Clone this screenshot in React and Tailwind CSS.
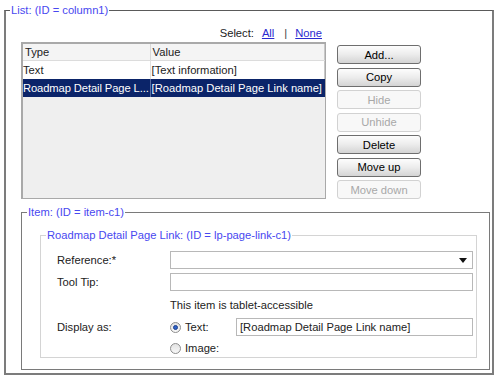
import React from 'react';

const font = { fontFamily: '"Liberation Sans", Arial, sans-serif' };

const Button = ({ children, disabled }) => (
  <div
    className={
      disabled
        ? 'h-[19px] w-[84px] flex items-center justify-center rounded-[3px] border border-[#d2d2d2] bg-[#f8f8f8] text-[#a8a8a8]'
        : 'h-[19px] w-[84px] flex items-center justify-center rounded-[3px] border border-[#6e6e6e] bg-gradient-to-b from-[#fdfdfd] via-[#ececec] to-[#d4d4d4] text-black'
    }
  >
    {children}
  </div>
);

const Radio = ({ checked }) => (
  <span className="w-[11px] h-[11px] rounded-full border border-[#8d8d8d] bg-gradient-to-b from-[#e2e2e2] to-[#f8f8f8] flex items-center justify-center shrink-0">
    {checked && <span className="w-[5px] h-[5px] rounded-full bg-[#2c62c8] border border-[#1d3f8c]" />}
  </span>
);

const App = () => {
  return (
    <div className="w-[500px] h-[379px] bg-white pl-[4px] pt-[3px] text-[11.2px] leading-[14px] text-[#222]" style={font}>
      {/* Outer list fieldset */}
      <fieldset className="w-[490px] h-[372px] border-t border-x-2 border-b-2 border-[#7c7c7c] border-t-[#5a5a5a]">
        <legend className="ml-[4px] px-[1px] text-[#4848f0]">List: (ID = column1)</legend>
        <div className="pl-[15px] pr-[2px]">
          {/* Select row */}
          <div className="w-[305px] flex justify-end items-center pt-[9px] pr-[4px] h-[23px]">
            <span>Select:</span>
            <span className="text-[#2a2ad0] underline ml-[8px]">All</span>
            <span className="text-[#444] ml-[10px]">|</span>
            <span className="text-[#2a2ad0] underline ml-[8px]">None</span>
          </div>

          <div className="flex gap-[11px] mt-[2px]">
            {/* Table */}
            <div className="w-[305px] h-[157px] border border-[#a9a9a9] border-l-2 border-t-2 bg-[#efefef] overflow-hidden">
              <div className="flex h-[17px] bg-[#f4f4f4] border-b border-[#dcdcdc]">
                <div className="w-[128px] pl-[2px] flex items-center border-r border-[#d8d8d8]">Type</div>
                <div className="w-[175px] pl-[2px] flex items-center border-r border-[#c8c8c8]">Value</div>
              </div>
              <div className="flex h-[18px] bg-white">
                <div className="w-[128px] flex items-center border-r border-[#e0e0e0]">Text</div>
                <div className="w-[175px] pl-[1px] flex items-center border-r border-[#c8c8c8]">[Text information]</div>
              </div>
              <div className="flex h-[18px] bg-[#0b2469] text-white">
                <div className="w-[128px] flex items-center border-r border-[#5a6ea0] whitespace-nowrap tracking-[-0.1px]">Roadmap Detail Page L...</div>
                <div className="w-[175px] pl-[1px] flex items-center whitespace-nowrap overflow-hidden">[Roadmap Detail Page Link name]</div>
              </div>
            </div>

            {/* Buttons */}
            <div className="flex flex-col gap-[3.5px] mt-[3px]">
              <Button>Add...</Button>
              <Button>Copy</Button>
              <Button disabled>Hide</Button>
              <Button disabled>Unhide</Button>
              <Button>Delete</Button>
              <Button>Move up</Button>
              <Button disabled>Move down</Button>
            </div>
          </div>

          {/* Item fieldset */}
          <fieldset className="mt-[6px] w-[469px] border border-[#7a7a7a]">
            <legend className="ml-[5px] px-[1px] text-[#4848f0]">Item: (ID = item-c1)</legend>
            <div className="pl-[18px] pr-[12px] pt-[9px] pb-[11px]">
              <fieldset className="w-[437px] border border-[#d4d4d4]">
                <legend className="ml-[5px] px-[1px] text-[#4848f0]">Roadmap Detail Page Link: (ID = lp-page-link-c1)</legend>
                <div className="pl-[16px] pr-[3px] pt-[9px] pb-[2px]">
                  <div className="flex items-center h-[18px]">
                    <span className="w-[113px]">Reference:*</span>
                    <div className="flex-1 h-[18px] border border-[#b8b8b8] bg-white flex items-center justify-end pr-[5px]">
                      <svg width="8" height="5" viewBox="0 0 8 5">
                        <path d="M0 0 L8 0 L4 5 Z" fill="#111" />
                      </svg>
                    </div>
                  </div>
                  <div className="flex items-center h-[18px] mt-[4px]">
                    <span className="w-[113px]">Tool Tip:</span>
                    <div className="flex-1 h-[18px] border border-[#b8b8b8] bg-white" />
                  </div>
                  <div className="flex items-center h-[14px] mt-[7px]">
                    <span className="w-[113px]" />
                    <span>This item is tablet-accessible</span>
                  </div>
                  <div className="flex items-center h-[18px] mt-[6px]">
                    <span className="w-[113px]">Display as:</span>
                    <Radio checked />
                    <span className="ml-[4px] w-[51px]">Text:</span>
                    <div className="flex-1 h-[18px] border border-[#b8b8b8] bg-white flex items-center pl-[3px]">
                      [Roadmap Detail Page Link name]
                    </div>
                  </div>
                  <div className="flex items-center h-[14px] mt-[5px]">
                    <span className="w-[113px]" />
                    <Radio />
                    <span className="ml-[4px]">Image:</span>
                  </div>
                </div>
              </fieldset>
            </div>
          </fieldset>
        </div>
      </fieldset>
    </div>
  );
};

export default App;
